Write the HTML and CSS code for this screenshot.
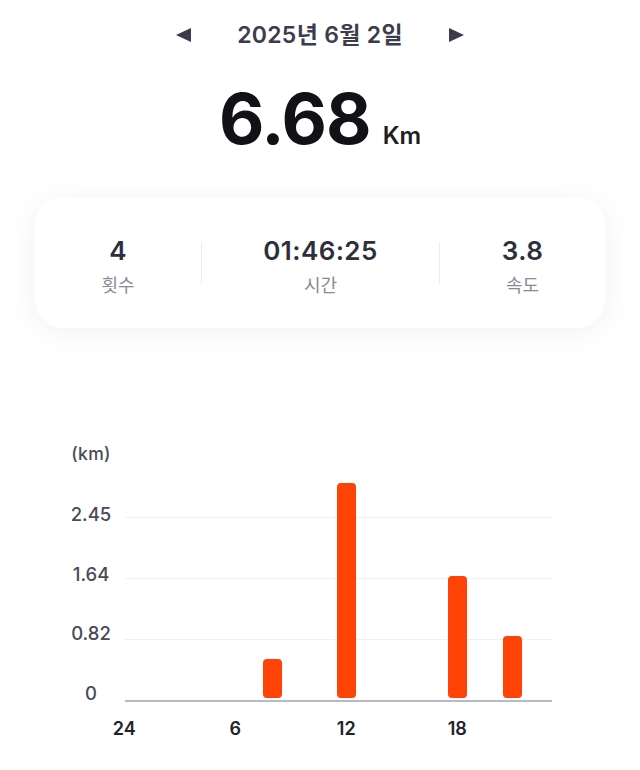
FILE: index.html
```html
<!DOCTYPE html>
<html lang="ko">
  <head>
    <meta charset="UTF-8" />
    <meta name="viewport" content="width=device-width, initial-scale=1.0" />
    <title>일일 기록</title>
    <link rel="stylesheet" href="styles.css">
  </head>
  <body>
    <div class="date-nav">
      <button class="nav-btn" aria-label="이전 날짜">
        <svg width="15" height="14" viewBox="0 0 15 14"><polygon points="0,7 15,0 15,14" /></svg>
      </button>
      <span class="date-text">2025년 6월 2일</span>
      <button class="nav-btn" aria-label="다음 날짜">
        <svg width="15" height="14" viewBox="0 0 15 14"><polygon points="15,7 0,0 0,14" /></svg>
      </button>
    </div>

    <div class="total">
      <span class="total-value">6.68</span>
      <span class="total-unit">Km</span>
    </div>

    <div class="summary">
      <div class="stat">
        <div class="stat-value">4</div>
        <div class="stat-label">횟수</div>
      </div>
      <div class="divider"></div>
      <div class="stat">
        <div class="stat-value">01:46:25</div>
        <div class="stat-label">시간</div>
      </div>
      <div class="divider"></div>
      <div class="stat">
        <div class="stat-value">3.8</div>
        <div class="stat-label">속도</div>
      </div>
    </div>

    <div class="chart">
      <div class="chart-body">
        <div class="y-axis">
          <span class="unit">(km)</span>
          <span>2.45</span>
          <span>1.64</span>
          <span>0.82</span>
          <span>0</span>
        </div>
        <div class="plot">
          <div class="grid">
            <div class="grid-row"></div>
            <div class="grid-row"></div>
            <div class="grid-row"></div>
            <div class="grid-row axis"></div>
          </div>
          <div class="bars">
            <div class="bar" style="grid-column: 9; height: 39px"></div>
            <div class="bar" style="grid-column: 13; height: 215px"></div>
            <div class="bar" style="grid-column: 19; height: 122px"></div>
            <div class="bar" style="grid-column: 22; height: 62px"></div>
          </div>
        </div>
      </div>
      <div class="x-axis">
        <span style="grid-column: 1">24</span>
        <span style="grid-column: 7">6</span>
        <span style="grid-column: 13">12</span>
        <span style="grid-column: 19">18</span>
      </div>
    </div>
  </body>
</html>
```

FILE: styles.css
```css
body {
  margin: 0;
  background-color: #ffffff;
  font-family: 'Inter', 'Noto Sans CJK KR', sans-serif;
  color: #1c1c24;
}

.date-nav {
  display: flex;
  justify-content: center;
  align-items: center;
  gap: 46px;
  padding-top: 20px;
  height: 30px;
}
.nav-btn {
  display: flex;
  padding: 0;
  border: none;
  background: none;
  cursor: pointer;
}
.nav-btn svg {
  fill: #3b3b4d;
}
.date-text {
  font-size: 23px;
  font-weight: 600;
  line-height: 30px;
  letter-spacing: 0.3px;
  color: #3c3c4c;
}

.total {
  display: flex;
  justify-content: center;
  align-items: baseline;
  gap: 12px;
  margin-top: 34px;
}
.total-value {
  font-size: 70px;
  font-weight: 700;
  line-height: 70px;
  letter-spacing: -1px;
  color: #111116;
}
.total-unit {
  font-size: 24px;
  font-weight: 600;
  color: #1e1e24;
}

.summary {
  display: grid;
  grid-template-columns: 166px 1px 237px 1px 165px;
  align-items: center;
  height: 131px;
  margin: 43px 35px 0;
  background-color: #ffffff;
  border-radius: 28px;
  box-shadow: 0 4px 32px rgba(0, 0, 0, 0.06);
}
.stat {
  display: flex;
  flex-direction: column;
  align-items: center;
  gap: 8px;
  padding-top: 8px;
}
.stat-value {
  font-size: 26px;
  font-weight: 600;
  line-height: 30px;
  letter-spacing: 0.4px;
  color: #2f2f3c;
}
.stat-label {
  font-size: 18px;
  line-height: 24px;
  color: #8b8b97;
}
.divider {
  height: 42px;
  background-color: #ececf0;
}

.chart {
  margin-top: 129px;
}
.chart-body {
  display: flex;
  padding-left: 67px;
}
.y-axis {
  display: flex;
  flex-direction: column;
  justify-content: space-between;
  align-items: center;
  width: 48px;
  height: 259px;
  margin-top: -13px;
  font-size: 18.5px;
  font-weight: 500;
  line-height: 20px;
  color: #4a4a58;
}
.y-axis .unit {
  font-size: 17.5px;
  letter-spacing: 0.3px;
}
.plot {
  position: relative;
  width: 444px;
  height: 245px;
}
.grid {
  position: absolute;
  top: 0;
  left: 10px;
  right: 7px;
  bottom: 0;
  display: flex;
  flex-direction: column;
}
.grid-row {
  height: 60px;
  border-bottom: 1px solid #f1f1f4;
}
.grid-row.axis {
  height: 60px;
  border-bottom: 2px solid #b9b9c5;
}
.bars {
  position: relative;
  display: grid;
  grid-template-columns: repeat(24, 18.5px);
  align-items: end;
  height: 241px;
}
.bar {
  grid-row: 1;
  justify-self: center;
  width: 19px;
  background-color: #ff4306;
  border-radius: 4px;
}

.x-axis {
  display: grid;
  grid-template-columns: repeat(24, 18.5px);
  margin-top: 15px;
  padding-left: 115px;
  font-size: 18px;
  font-weight: 600;
  line-height: 22px;
  color: #222228;
}
.x-axis span {
  justify-self: center;
  white-space: nowrap;
}
```
